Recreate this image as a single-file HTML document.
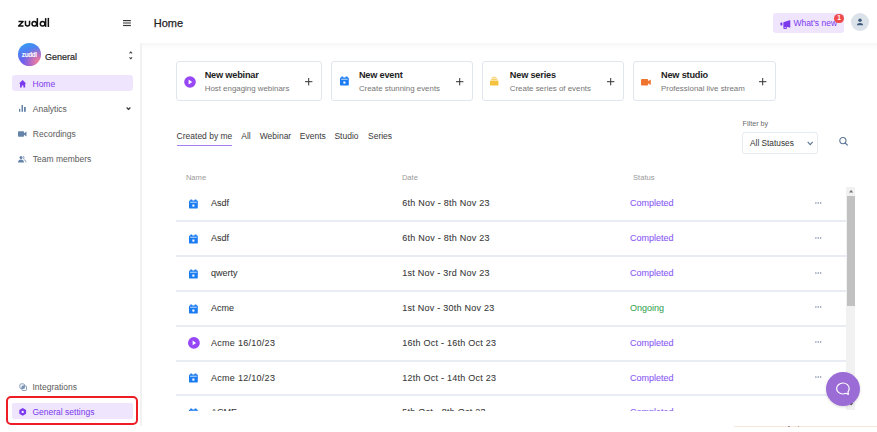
<!DOCTYPE html>
<html><head><meta charset="utf-8">
<style>
*{margin:0;padding:0;box-sizing:border-box}
html,body{width:877px;height:432px;overflow:hidden;background:#fff}
body{position:relative;font-family:"Liberation Sans",sans-serif;color:#333}
.a{position:absolute;white-space:nowrap;line-height:1}
svg{position:absolute;overflow:visible}
.nav{font-size:8.5px;color:#5a5a5a}
.card{position:absolute;top:61px;height:40px;border:1px solid #e1e6ee;border-radius:3px;background:#fff}
.ct{position:absolute;font-weight:bold;font-size:9.2px;letter-spacing:-0.2px;color:#1e1e1e;line-height:1}
.cs{position:absolute;font-size:7.9px;color:#767676;line-height:1}
.tab{font-size:8.5px;color:#3a3a3a}
.th{font-size:7.6px;color:#9a9a9a}
.sep{position:absolute;left:176px;width:670px;height:2px;background:#e9edf3}
.rt{font-size:9px;color:#383838;-webkit-text-stroke:0.07px #383838}
.st{font-size:9px;color:#8b5cf6;-webkit-text-stroke:0.1px currentColor}
.dots{position:absolute;left:815px;width:6.5px;height:2px}
</style></head><body>

<!-- header -->
<svg style="left:0;top:0" width="60" height="35" viewBox="0 0 60 35"><g fill="none" stroke="#111" stroke-width="1.5"><path d="M18.5 21.45H23.1L18.6 26.05H23.5" stroke-linejoin="round"/><path d="M25.45 20.7V23.9A2.05 2.05 0 0 0 29.55 23.9V20.7"/><circle cx="34.3" cy="23.75" r="2.3"/><path d="M37.35 18.1V26.9"/><circle cx="42.6" cy="23.75" r="2.3"/><path d="M45.65 18.1V26.9"/><path d="M48.35 17.9V27"/></g></svg>
<svg style="left:123.2px;top:19.8px" width="8" height="7" viewBox="0 0 8 7"><rect x="0" y="0" width="7.9" height="1.2" fill="#3a3a3a"/><rect x="0" y="2.4" width="7.9" height="1.2" fill="#555"/><rect x="0" y="4.9" width="7.9" height="1.2" fill="#3a3a3a"/></svg>
<div class="a" style="left:153.8px;top:17.6px;font-size:11px;color:#222;-webkit-text-stroke:0.25px #222">Home</div>

<!-- what's new -->
<div style="position:absolute;left:772.7px;top:12.7px;width:71px;height:20px;background:#efe5fd;border-radius:3px"></div>
<svg style="left:779.5px;top:19.5px" width="11" height="10" viewBox="0 0 11 10"><rect x="0.4" y="2.4" width="2" height="3" rx="0.6" fill="#7c3aed"/><path d="M3.4 2.3L9.5 0.2Q10.3 0 10.3 0.8V6.9Q10.3 7.7 9.5 7.5L3.4 5.9z" fill="#7c3aed"/><path fill-rule="evenodd" d="M3.4 5.6H7L6.7 8.4Q6.6 9.1 5.9 9.1H4.2Q3.4 9.1 3.4 8.3zM4.4 6.9H5.9V7.8H4.4z" fill="#7c3aed"/></svg>
<div class="a" style="left:793.4px;top:18.6px;font-size:8.5px;color:#7c3aed">What's new</div>
<div style="position:absolute;left:834.3px;top:13.6px;width:9.6px;height:9.6px;border-radius:50%;background:#ef4b4b"></div>
<div class="a" style="left:837.2px;top:14.9px;font-size:6.5px;font-weight:bold;color:#fff">1</div>
<div style="position:absolute;left:850.8px;top:13.2px;width:18.3px;height:18.3px;border-radius:50%;background:#dbe2ea"></div>
<svg style="left:856px;top:18.3px" width="8" height="8" viewBox="0 0 8 8"><circle cx="4" cy="2.3" r="1.7" fill="#3d5a7a"/><path d="M0.9 7.3c0-1.6 1.3-2.4 3.1-2.4s3.1 0.8 3.1 2.4z" fill="#3d5a7a"/></svg>

<!-- sidebar -->
<div style="position:absolute;left:17.6px;top:43px;width:23px;height:23px;border-radius:50%;background:radial-gradient(circle at 88% 82%,#f5829a 0%,rgba(240,120,160,0.6) 25%,rgba(240,120,160,0) 55%),linear-gradient(165deg,#2fa2f3 0%,#4f80f2 35%,#6a62ef 65%,#7d55ea 100%)"></div>
<div class="a" style="left:21.8px;top:51.8px;font-size:6.4px;font-weight:bold;color:#fff;letter-spacing:-0.35px">zuddl</div>
<div class="a" style="left:45px;top:52.6px;font-size:9px;color:#262626;-webkit-text-stroke:0.2px #262626">General</div>
<svg style="left:128.8px;top:50.5px" width="4" height="9" viewBox="0 0 4 9"><path d="M0.5 2.3L1.8 1L3.1 2.3M0.5 6.3L1.8 7.6L3.1 6.3" fill="none" stroke="#444" stroke-width="1.1"/></svg>

<div style="position:absolute;left:12px;top:75.1px;width:121px;height:16.2px;background:#efe6fd;border-radius:3px"></div>
<svg style="left:18.9px;top:79.8px" width="7.2" height="7.6" viewBox="0 0 7.2 7.6"><path d="M3.6 0L7.2 3.4H6.2V7.6H4.4V5.4H2.8V7.6H1V3.4H0z" fill="#7c3aed"/></svg>
<div class="a nav" style="left:32.5px;top:79.7px;color:#7c3aed">Home</div>

<svg style="left:18.9px;top:105px" width="7.2" height="7" viewBox="0 0 7.2 7"><rect x="0" y="3.8" width="1.3" height="3" fill="#6683a9"/><rect x="2.5" y="0" width="1.5" height="6.8" fill="#6683a9"/><rect x="5" y="2" width="1.8" height="4.8" fill="#6683a9"/></svg>
<div class="a nav" style="left:32.8px;top:104.8px">Analytics</div>
<svg style="left:126px;top:107px" width="5" height="3" viewBox="0 0 5 3"><path d="M0.6 0.5L2.5 2.4L4.4 0.5" fill="none" stroke="#333" stroke-width="1.15"/></svg>

<svg style="left:18.3px;top:131px" width="8.5" height="6" viewBox="0 0 8.5 6"><rect x="0" y="0.2" width="6" height="5.6" rx="0.8" fill="#6683a9"/><path d="M6 2.2L8.5 0.6V5.4L6 3.8z" fill="#6683a9"/></svg>
<div class="a nav" style="left:32.8px;top:130.3px">Recordings</div>

<svg style="left:18.3px;top:156px" width="8" height="6.5" viewBox="0 0 8 6.5"><circle cx="3" cy="1.6" r="1.5" fill="#6683a9"/><path d="M0 6.4c0-2 1.3-3 3-3s3 1 3 3z" fill="#6683a9"/><path d="M5 0.3a1.4 1.4 0 0 1 0 2.7M6 3.6c1.2 0.4 1.9 1.4 1.9 2.8" fill="none" stroke="#6683a9" stroke-width="0.8"/></svg>
<div class="a nav" style="left:32.8px;top:155.3px">Team members</div>

<svg style="left:18.5px;top:382.5px" width="8" height="8" viewBox="0 0 8 8"><rect x="0.9" y="0.9" width="4.6" height="4.6" rx="1" fill="none" stroke="#7a93b5" stroke-width="0.9"/><rect x="2.9" y="2.9" width="4.6" height="4.6" rx="1" fill="none" stroke="#7a93b5" stroke-width="0.9"/><rect x="2.9" y="2.9" width="2.6" height="2.6" fill="#7a93b5"/></svg>
<div class="a nav" style="left:32.5px;top:383px">Integrations</div>

<div style="position:absolute;left:6.2px;top:396.3px;width:132.2px;height:29px;border:2.1px solid #ee1c25;border-radius:5px"></div>
<div style="position:absolute;left:12px;top:403.4px;width:121px;height:16.1px;background:#efe6fd;border-radius:2px"></div>
<svg style="left:18.9px;top:407.6px" width="7.4" height="7.8" viewBox="0 0 7.4 7.8"><path d="M3.7 0L7.1 1.95V5.85L3.7 7.8L0.3 5.85V1.95z" fill="#7c3aed"/><circle cx="3.7" cy="3.9" r="1.2" fill="#efe6fd"/></svg>
<div class="a nav" style="left:32.5px;top:407.9px;color:#7c3aed">General settings</div>

<!-- content frame -->
<div style="position:absolute;left:140px;top:43px;width:2px;height:383px;background:#f2f2f2"></div>
<div style="position:absolute;left:142px;top:43px;width:735px;height:7px;background:linear-gradient(#f7f7f7,#fff)"></div>

<!-- cards -->
<div class="card" style="left:176.4px;width:145.4px">
  <svg style="left:6.3px;top:13.6px" width="12" height="12" viewBox="0 0 12 12"><circle cx="6" cy="6" r="5.8" fill="#9747f5"/><path d="M4.6 3.6L8.2 6L4.6 8.4z" fill="#fff"/></svg>
  <div class="ct" style="left:27.3px;top:8.7px">New webinar</div>
  <div class="cs" style="left:27.3px;top:23.2px">Host engaging webinars</div>
  <svg style="left:127.4px;top:16px" width="8" height="8" viewBox="0 0 8 8"><path d="M3.7 0V7.4M0 3.7H7.4" stroke="#333" stroke-width="1"/></svg>
</div>
<div class="card" style="left:331.3px;width:141.3px">
  <svg style="left:7.6px;top:14.4px" width="9" height="10" viewBox="0 0 9 10"><rect x="0" y="1.4" width="8.8" height="8.2" rx="1.2" fill="#1b7cf2"/><rect x="1.1" y="0.4" width="2.3" height="2" rx="0.8" fill="#1b7cf2"/><rect x="5.4" y="0.4" width="2.3" height="2" rx="0.8" fill="#1b7cf2"/><rect x="1.1" y="2.8" width="6.6" height="0.75" fill="#fff"/><rect x="3.35" y="5.5" width="2.1" height="2.1" fill="#fff"/></svg>
  <div class="ct" style="left:26.6px;top:8.7px">New event</div>
  <div class="cs" style="left:26.6px;top:23.2px">Create stunning events</div>
  <svg style="left:123.4px;top:16px" width="8" height="8" viewBox="0 0 8 8"><path d="M3.7 0V7.4M0 3.7H7.4" stroke="#333" stroke-width="1"/></svg>
</div>
<div class="card" style="left:481.8px;width:142px">
  <svg style="left:7.6px;top:14.4px" width="9" height="10" viewBox="0 0 9 10"><rect x="0" y="4.6" width="8.4" height="5" rx="0.9" fill="#f6c13c"/><rect x="1" y="2.6" width="6.4" height="1.4" rx="0.4" fill="#f7d16e"/><rect x="2" y="0.7" width="4.4" height="1.4" rx="0.4" fill="#f8d985"/></svg>
  <div class="ct" style="left:27px;top:8.7px">New series</div>
  <div class="cs" style="left:27px;top:23.2px">Create series of events</div>
  <svg style="left:123.8px;top:16px" width="8" height="8" viewBox="0 0 8 8"><path d="M3.7 0V7.4M0 3.7H7.4" stroke="#333" stroke-width="1"/></svg>
</div>
<div class="card" style="left:632.7px;width:143.2px">
  <svg style="left:7.3px;top:16.6px" width="10" height="7" viewBox="0 0 10 7"><rect x="0" y="0" width="7.2" height="6.4" rx="1" fill="#ef7430"/><path d="M7 2.2L9.8 0.4V6L7 4.2z" fill="#ef7430"/></svg>
  <div class="ct" style="left:27.3px;top:8.7px">New studio</div>
  <div class="cs" style="left:27.3px;top:23.2px">Professional live stream</div>
  <svg style="left:125.3px;top:16px" width="8" height="8" viewBox="0 0 8 8"><path d="M3.7 0V7.4M0 3.7H7.4" stroke="#333" stroke-width="1"/></svg>
</div>

<!-- tabs -->
<div class="a tab" style="left:176.6px;top:131.6px">Created by me</div>
<div style="position:absolute;left:176.6px;top:145px;width:55.6px;height:1.4px;background:#a67cf4"></div>
<div class="a tab" style="left:241.3px;top:131.6px">All</div>
<div class="a tab" style="left:259.7px;top:131.6px">Webinar</div>
<div class="a tab" style="left:299.8px;top:131.6px">Events</div>
<div class="a tab" style="left:334.4px;top:131.6px">Studio</div>
<div class="a tab" style="left:368px;top:131.6px">Series</div>

<!-- filter -->
<div class="a" style="left:742.6px;top:119.9px;font-size:7.2px;color:#6a6a6a">Filter by</div>
<div style="position:absolute;left:742.3px;top:132.2px;width:76px;height:21.8px;border:1px solid #e6ebf2;border-radius:3px"></div>
<div class="a" style="left:750px;top:139px;font-size:8.3px;color:#333">All Statuses</div>
<svg style="left:806.6px;top:141px" width="7" height="5" viewBox="0 0 7 5"><path d="M0.7 0.8L3.2 3.6L5.7 0.8" fill="none" stroke="#5a7292" stroke-width="1.1"/></svg>
<svg style="left:839px;top:137px" width="9" height="9" viewBox="0 0 9 9"><circle cx="3.9" cy="3.6" r="3.1" fill="none" stroke="#5a7494" stroke-width="1.1"/><path d="M6.1 5.9L8.3 8" stroke="#5a7494" stroke-width="1.2" stroke-linecap="round"/></svg>

<!-- table header -->
<div class="a th" style="left:185.9px;top:173.8px">Name</div>
<div class="a th" style="left:401.9px;top:173.8px">Date</div>
<div class="a th" style="left:633px;top:173.8px">Status</div>

<!-- rows (clipped) -->
<div style="position:absolute;left:0;top:0;width:877px;height:410.6px;overflow:hidden">
<svg style="left:189px;top:199.10px" width="9" height="10" viewBox="0 0 9 10"><rect x="0" y="1.4" width="8.8" height="8.2" rx="1.2" fill="#1b7cf2"/><rect x="1.1" y="0.4" width="2.3" height="2" rx="0.8" fill="#1b7cf2"/><rect x="5.4" y="0.4" width="2.3" height="2" rx="0.8" fill="#1b7cf2"/><rect x="1.1" y="2.8" width="6.6" height="0.75" fill="#fff"/><rect x="3.35" y="5.5" width="2.1" height="2.1" fill="#fff"/></svg>
<div class="a rt" style="left:211px;top:199.28px;letter-spacing:0">Asdf</div>
<div class="a rt" style="left:402.3px;top:199.28px;letter-spacing:0.24px">6th Nov - 8th Nov 23</div>
<div class="a st" style="left:629.9px;top:199.28px;color:#8b5cf6">Completed</div>
<svg class="dots" style="left:814.8px;top:201.90px" width="6.5" height="2" viewBox="0 0 6.5 2"><circle cx="0.9" cy="1" r="0.75" fill="#6c7f9c"/><circle cx="3.25" cy="1" r="0.75" fill="#6c7f9c"/><circle cx="5.6" cy="1" r="0.75" fill="#6c7f9c"/></svg>
<div class="sep" style="top:220px"></div>
<svg style="left:189px;top:233.95px" width="9" height="10" viewBox="0 0 9 10"><rect x="0" y="1.4" width="8.8" height="8.2" rx="1.2" fill="#1b7cf2"/><rect x="1.1" y="0.4" width="2.3" height="2" rx="0.8" fill="#1b7cf2"/><rect x="5.4" y="0.4" width="2.3" height="2" rx="0.8" fill="#1b7cf2"/><rect x="1.1" y="2.8" width="6.6" height="0.75" fill="#fff"/><rect x="3.35" y="5.5" width="2.1" height="2.1" fill="#fff"/></svg>
<div class="a rt" style="left:211px;top:234.13px;letter-spacing:0">Asdf</div>
<div class="a rt" style="left:402.3px;top:234.13px;letter-spacing:0.24px">6th Nov - 8th Nov 23</div>
<div class="a st" style="left:629.9px;top:234.13px;color:#8b5cf6">Completed</div>
<svg class="dots" style="left:814.8px;top:236.75px" width="6.5" height="2" viewBox="0 0 6.5 2"><circle cx="0.9" cy="1" r="0.75" fill="#6c7f9c"/><circle cx="3.25" cy="1" r="0.75" fill="#6c7f9c"/><circle cx="5.6" cy="1" r="0.75" fill="#6c7f9c"/></svg>
<div class="sep" style="top:255px"></div>
<svg style="left:189px;top:268.80px" width="9" height="10" viewBox="0 0 9 10"><rect x="0" y="1.4" width="8.8" height="8.2" rx="1.2" fill="#1b7cf2"/><rect x="1.1" y="0.4" width="2.3" height="2" rx="0.8" fill="#1b7cf2"/><rect x="5.4" y="0.4" width="2.3" height="2" rx="0.8" fill="#1b7cf2"/><rect x="1.1" y="2.8" width="6.6" height="0.75" fill="#fff"/><rect x="3.35" y="5.5" width="2.1" height="2.1" fill="#fff"/></svg>
<div class="a rt" style="left:211px;top:268.98px;letter-spacing:0">qwerty</div>
<div class="a rt" style="left:402.3px;top:268.98px;letter-spacing:0.24px">1st Nov - 3rd Nov 23</div>
<div class="a st" style="left:629.9px;top:268.98px;color:#8b5cf6">Completed</div>
<svg class="dots" style="left:814.8px;top:271.60px" width="6.5" height="2" viewBox="0 0 6.5 2"><circle cx="0.9" cy="1" r="0.75" fill="#6c7f9c"/><circle cx="3.25" cy="1" r="0.75" fill="#6c7f9c"/><circle cx="5.6" cy="1" r="0.75" fill="#6c7f9c"/></svg>
<div class="sep" style="top:290px"></div>
<svg style="left:189px;top:303.65px" width="9" height="10" viewBox="0 0 9 10"><rect x="0" y="1.4" width="8.8" height="8.2" rx="1.2" fill="#1b7cf2"/><rect x="1.1" y="0.4" width="2.3" height="2" rx="0.8" fill="#1b7cf2"/><rect x="5.4" y="0.4" width="2.3" height="2" rx="0.8" fill="#1b7cf2"/><rect x="1.1" y="2.8" width="6.6" height="0.75" fill="#fff"/><rect x="3.35" y="5.5" width="2.1" height="2.1" fill="#fff"/></svg>
<div class="a rt" style="left:211px;top:303.83px;letter-spacing:0">Acme</div>
<div class="a rt" style="left:402.3px;top:303.83px;letter-spacing:0.24px">1st Nov - 30th Nov 23</div>
<div class="a st" style="left:629.9px;top:303.83px;color:#3fa85a">Ongoing</div>
<svg class="dots" style="left:814.8px;top:306.45px" width="6.5" height="2" viewBox="0 0 6.5 2"><circle cx="0.9" cy="1" r="0.75" fill="#6c7f9c"/><circle cx="3.25" cy="1" r="0.75" fill="#6c7f9c"/><circle cx="5.6" cy="1" r="0.75" fill="#6c7f9c"/></svg>
<div class="sep" style="top:325px"></div>
<svg style="left:187.6px;top:337.20px" width="12" height="12" viewBox="0 0 12 12"><circle cx="5.9" cy="5.9" r="5.9" fill="#9747f5"/><path d="M4.6 3.6L8.1 5.9L4.6 8.2z" fill="#fff"/></svg>
<div class="a rt" style="left:211px;top:338.68px;letter-spacing:0.28px">Acme 16/10/23</div>
<div class="a rt" style="left:402.3px;top:338.68px;letter-spacing:0.24px">16th Oct - 16th Oct 23</div>
<div class="a st" style="left:629.9px;top:338.68px;color:#8b5cf6">Completed</div>
<svg class="dots" style="left:814.8px;top:341.30px" width="6.5" height="2" viewBox="0 0 6.5 2"><circle cx="0.9" cy="1" r="0.75" fill="#6c7f9c"/><circle cx="3.25" cy="1" r="0.75" fill="#6c7f9c"/><circle cx="5.6" cy="1" r="0.75" fill="#6c7f9c"/></svg>
<div class="sep" style="top:360px"></div>
<svg style="left:189px;top:373.35px" width="9" height="10" viewBox="0 0 9 10"><rect x="0" y="1.4" width="8.8" height="8.2" rx="1.2" fill="#1b7cf2"/><rect x="1.1" y="0.4" width="2.3" height="2" rx="0.8" fill="#1b7cf2"/><rect x="5.4" y="0.4" width="2.3" height="2" rx="0.8" fill="#1b7cf2"/><rect x="1.1" y="2.8" width="6.6" height="0.75" fill="#fff"/><rect x="3.35" y="5.5" width="2.1" height="2.1" fill="#fff"/></svg>
<div class="a rt" style="left:211px;top:373.53px;letter-spacing:0.28px">Acme 12/10/23</div>
<div class="a rt" style="left:402.3px;top:373.53px;letter-spacing:0.24px">12th Oct - 14th Oct 23</div>
<div class="a st" style="left:629.9px;top:373.53px;color:#8b5cf6">Completed</div>
<svg class="dots" style="left:814.8px;top:376.15px" width="6.5" height="2" viewBox="0 0 6.5 2"><circle cx="0.9" cy="1" r="0.75" fill="#6c7f9c"/><circle cx="3.25" cy="1" r="0.75" fill="#6c7f9c"/><circle cx="5.6" cy="1" r="0.75" fill="#6c7f9c"/></svg>
<div class="sep" style="top:394px"></div>
<svg style="left:189px;top:408.20px" width="9" height="10" viewBox="0 0 9 10"><rect x="0" y="1.4" width="8.8" height="8.2" rx="1.2" fill="#1b7cf2"/><rect x="1.1" y="0.4" width="2.3" height="2" rx="0.8" fill="#1b7cf2"/><rect x="5.4" y="0.4" width="2.3" height="2" rx="0.8" fill="#1b7cf2"/><rect x="1.1" y="2.8" width="6.6" height="0.75" fill="#fff"/><rect x="3.35" y="5.5" width="2.1" height="2.1" fill="#fff"/></svg>
<div class="a rt" style="left:211px;top:408.38px;letter-spacing:0">ACME</div>
<div class="a rt" style="left:402.3px;top:408.38px;letter-spacing:0.24px">5th Oct - 8th Oct 23</div>
<div class="a st" style="left:629.9px;top:408.38px;color:#8b5cf6">Completed</div>
<svg class="dots" style="left:814.8px;top:411.00px" width="6.5" height="2" viewBox="0 0 6.5 2"><circle cx="0.9" cy="1" r="0.75" fill="#6c7f9c"/><circle cx="3.25" cy="1" r="0.75" fill="#6c7f9c"/><circle cx="5.6" cy="1" r="0.75" fill="#6c7f9c"/></svg>
</div>

<!-- scrollbar -->
<div style="position:absolute;left:846px;top:186.5px;width:9.3px;height:223.5px;background:#f1f1f1"></div>
<div style="position:absolute;left:847px;top:196px;width:7.5px;height:109.7px;background:#c1c1c1"></div>
<svg style="left:848.7px;top:189.8px" width="4.2" height="2.6" viewBox="0 0 4.2 2.6"><path d="M0 2.6L2.1 0L4.2 2.6z" fill="#707070"/></svg>
<svg style="left:848.7px;top:403px" width="4.2" height="2.6" viewBox="0 0 4.2 2.6"><path d="M0 0L2.1 2.6L4.2 0z" fill="#505050"/></svg>

<!-- chat -->
<div style="position:absolute;left:825.8px;top:371.5px;width:34.2px;height:34.2px;border-radius:50%;background:#9b6bd6;box-shadow:0 1px 3px rgba(0,0,0,0.15)"></div>
<svg style="left:835px;top:382px" width="17" height="15" viewBox="0 0 17 15"><path d="M7.9 1.0c3.5 0 6.3 2.5 6.3 5.6c0 1.3-0.4 2.3-1.2 3.2l0.4 2.6-2.6-1.1c-0.9 0.5-1.9 0.7-2.9 0.7c-3.5 0-6.3-2.5-6.3-5.4s2.8-5.6 6.3-5.6z" fill="none" stroke="#fff" stroke-width="1.2" stroke-linejoin="round"/></svg>

<div style="position:absolute;left:734px;top:425.8px;width:143px;height:1px;background:#fbe6dc"></div>
<div style="position:absolute;left:788px;top:425.6px;width:1.5px;height:1.2px;background:#999"></div><div style="position:absolute;left:797.6px;top:425.6px;width:1.5px;height:1.2px;background:#aaa"></div>
</body></html>
